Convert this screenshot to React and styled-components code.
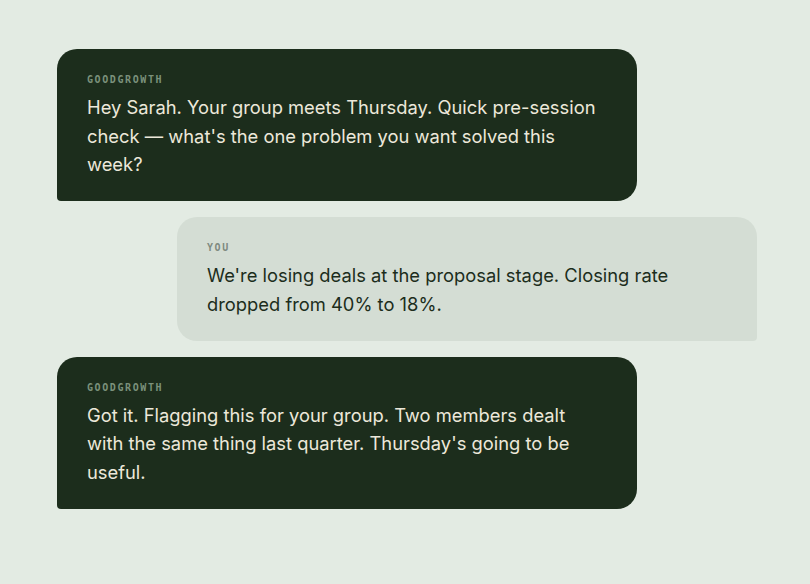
import React from "react";
import styled, { createGlobalStyle } from "styled-components";

const messages = [
  {
    from: "bot",
    label: "GOODGROWTH",
    text: "Hey Sarah. Your group meets Thursday. Quick pre-session check — what's the one problem you want solved this week?",
  },
  {
    from: "user",
    label: "YOU",
    text: "We're losing deals at the proposal stage. Closing rate dropped from 40% to 18%.",
  },
  {
    from: "bot",
    label: "GOODGROWTH",
    text: "Got it. Flagging this for your group. Two members dealt with the same thing last quarter. Thursday's going to be useful.",
  },
];

export default function App() {
  return (
    <>
      <GlobalStyle />
      <Thread>
        {messages.map((m, i) => (
          <Bubble key={i} $user={m.from === "user"}>
            <Label $user={m.from === "user"}>{m.label}</Label>
            <Text>{m.text}</Text>
          </Bubble>
        ))}
      </Thread>
    </>
  );
}

const GlobalStyle = createGlobalStyle`
  html, body {
    margin: 0;
    background: #e3ebe3;
  }
  body {
    font-family: "Inter", "DejaVu Sans", sans-serif;
  }
`;

const Thread = styled.div`
  width: 700px;
  margin: 0 auto;
  padding: 49px 0 0 4px;
  display: flex;
  flex-direction: column;
  gap: 16px;
`;

const Bubble = styled.div`
  width: 580px;
  box-sizing: border-box;
  padding: 24px 30px 22.5px;
  align-self: ${(p) => (p.$user ? "flex-end" : "flex-start")};
  background: ${(p) => (p.$user ? "#d4ddd4" : "#1c2d1c")};
  color: ${(p) => (p.$user ? "#1c2d1c" : "#ece8da")};
  border-radius: ${(p) => (p.$user ? "20px 20px 4px 20px" : "20px 20px 20px 4px")};
`;

const Label = styled.div`
  font-family: "DejaVu Sans Mono", monospace;
  font-size: 10px;
  font-weight: 700;
  letter-spacing: 1.6px;
  line-height: 14px;
  margin-bottom: 6px;
  color: ${(p) => (p.$user ? "#7f8a80" : "#7b917b")};
`;

const Text = styled.p`
  margin: 0;
  font-size: 18.35px;
  line-height: 28.5px;
  max-width: 515px;
`;
